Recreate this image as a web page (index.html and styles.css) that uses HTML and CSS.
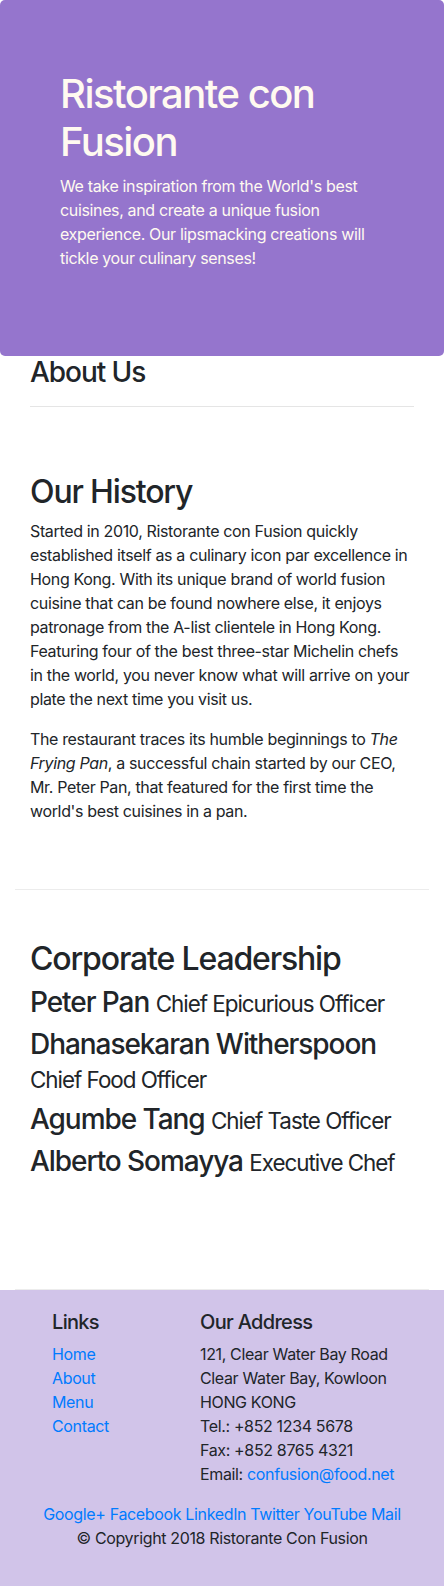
FILE: index.html
```html
<!DOCTYPE html>
<html lang="en">
<head>
<meta charset="utf-8">
<title>About Us - Ristorante con Fusion</title>
<link rel="stylesheet" href="styles.css">
</head>
<body>
<header class="jumbotron">
  <h1 class="hero-title">Ristorante con Fusion</h1>
  <p class="hero-text">We take inspiration from the World's best cuisines, and create a unique fusion experience. Our lipsmacking creations will tickle your culinary senses!</p>
</header>

<main class="container">
  <div class="page-head">
    <h3 class="h3">About Us</h3>
    <hr class="rule">
  </div>

  <section class="row-content">
    <h2 class="h2">Our History</h2>
    <p class="para">Started in 2010, Ristorante con Fusion quickly established itself as a culinary icon par excellence in Hong Kong. With its unique brand of world fusion cuisine that can be found nowhere else, it enjoys patronage from the A-list clientele in Hong Kong. Featuring four of the best three-star Michelin chefs in the world, you never know what will arrive on your plate the next time you visit us.</p>
    <p class="para">The restaurant traces its humble beginnings to <em>The Frying Pan</em>, a successful chain started by our CEO, Mr. Peter Pan, that featured for the first time the world's best cuisines in a pan.</p>
  </section>

  <section class="row-content">
    <h2 class="h2">Corporate Leadership</h2>
    <h3 class="h3 leader">Peter Pan <small class="role">Chief Epicurious Officer</small></h3>
    <h3 class="h3 leader">Dhanasekaran Witherspoon <small class="role">Chief Food Officer</small></h3>
    <h3 class="h3 leader">Agumbe Tang <small class="role">Chief Taste Officer</small></h3>
    <h3 class="h3 leader">Alberto Somayya <small class="role">Executive Chef</small></h3>
  </section>
</main>

<footer class="footer">
  <div class="footer-cols">
    <div class="col-links">
      <h5 class="h5">Links</h5>
      <ul class="link-list">
        <li><a class="link" href="#">Home</a></li>
        <li><a class="link" href="#">About</a></li>
        <li><a class="link" href="#">Menu</a></li>
        <li><a class="link" href="#">Contact</a></li>
      </ul>
    </div>
    <div class="col-address">
      <h5 class="h5">Our Address</h5>
      <address class="address">
        121, Clear Water Bay Road<br>
        Clear Water Bay, Kowloon<br>
        HONG KONG<br>
        Tel.: +852 1234 5678<br>
        Fax: +852 8765 4321<br>
        Email: <a class="link" href="#">confusion@food.net</a>
      </address>
    </div>
  </div>
  <div class="social"><a class="link" href="#">Google+</a> <a class="link" href="#">Facebook</a> <a class="link" href="#">LinkedIn</a> <a class="link" href="#">Twitter</a> <a class="link" href="#">YouTube</a> <a class="link" href="#">Mail</a></div>
  <p class="copyright">© Copyright 2018 Ristorante Con Fusion</p>
</footer>
</body>
</html>
```

FILE: styles.css
```css
* { box-sizing: border-box; }

html, body {
  margin: 0;
  padding: 0;
}

body {
  font-family: Inter, "Noto Sans", "Liberation Sans", sans-serif;
  font-size: 16px;
  line-height: 1.5;
  letter-spacing: -0.022em;
  color: #212529;
  background: #fff;
}

.jumbotron {
  background: #9575cd;
  color: floralwhite;
  padding: 70px 60px 70px 60px;
  border-radius: 5px;
  margin: 0;
}

.hero-title {
  font-size: 40px;
  font-weight: 500;
  line-height: 1.2;
  letter-spacing: -0.038em;
  margin: 0 0 8px 0;
}

.hero-text {
  margin: 0 0 16px 0;
}

.container {
  padding: 0 15px;
}

.page-head {
  padding: 0 15px;
}

.h2 {
  font-size: 32px;
  font-weight: 500;
  line-height: 1.2;
  letter-spacing: -0.036em;
  margin: 0 0 8px 0;
}

.h3 {
  font-size: 28px;
  font-weight: 500;
  line-height: 1.2;
  letter-spacing: -0.038em;
  margin: 0 0 8px 0;
}

.h5 {
  font-size: 20px;
  font-weight: 500;
  line-height: 1.2;
  letter-spacing: -0.034em;
  margin: 0 0 8px 0;
}

.page-head .h3 {
  margin-bottom: 16px;
}

.rule {
  margin: 0;
  border: 0;
  border-top: 1px solid rgba(0, 0, 0, 0.1);
  margin-bottom: 16px;
}

.row-content {
  padding: 50px 15px 50px 15px;
  border-bottom: 1px solid #ececec;
  min-height: 400px;
  display: flow-root;
}

.row-content:first-of-type {
  min-height: 0;
}

.para {
  margin: 0 0 16px 0;
}

.para em { font-style: italic; }

.role {
  font-size: 80%;
  font-weight: 400;
  letter-spacing: -0.045em;
}

.footer {
  background: #d1c4e9;
  padding: 20px 0 20px 0;
}

.footer-cols {
  display: grid;
  grid-template-columns: 37px 148px 1fr;
}

.col-links {
  grid-column: 2;
  padding: 0 15px;
}

.col-address {
  grid-column: 3;
  padding: 0 15px;
}

.link-list {
  list-style: none;
  margin: 0;
  padding: 0;
}

.address {
  font-style: normal;
  margin: 0 0 16px 0;
}

.link {
  color: #007bff;
  text-decoration: none;
}

.social {
  text-align: center;
}

.copyright {
  text-align: center;
  margin: 0 0 16px 0;
}
```
